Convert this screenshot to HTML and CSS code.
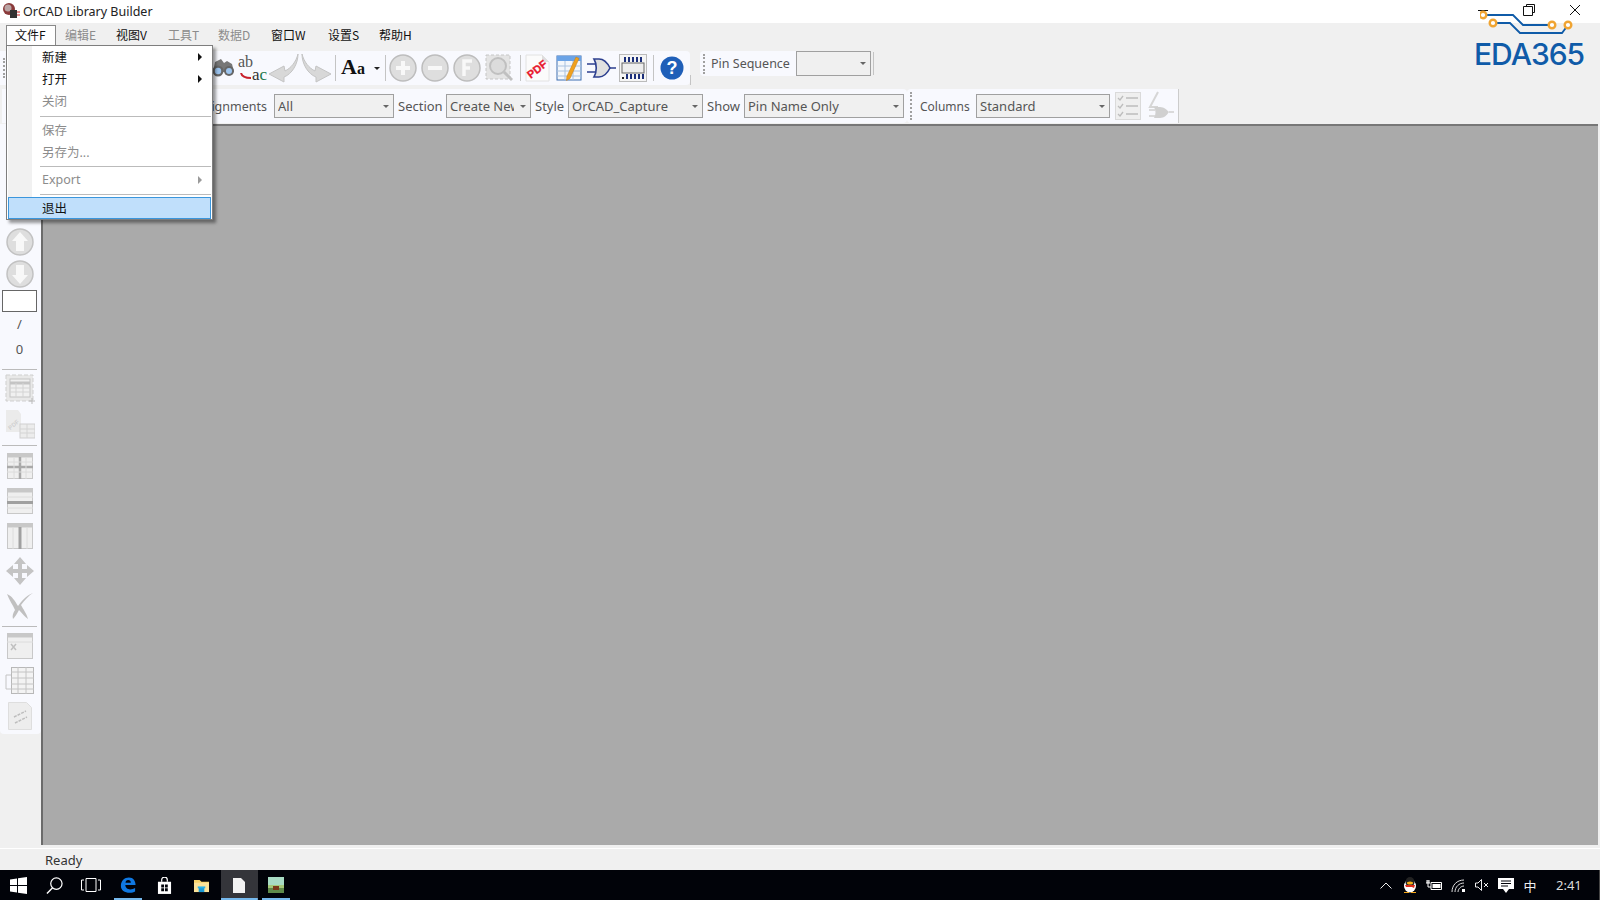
FILE: index.html
```html
<!DOCTYPE html>
<html lang="zh">
<head>
<meta charset="utf-8">
<title>OrCAD Library Builder</title>
<link rel="stylesheet" href="styles.css">
</head>
<body>
<div class="app">
  <header class="titlebar">
    <svg class="app-icon" viewBox="0 0 18 18"><circle cx="7" cy="7" r="6" fill="#8a3a3a"/><circle cx="6" cy="6" r="3.5" fill="#b9a5a5"/><rect x="8" y="8" width="7" height="8" fill="#333"/><path d="M15 10h3M15 13h3" stroke="#c22" stroke-width="1"/></svg>
    <span class="app-title">OrCAD Library Builder</span>
    <div class="win-controls">
      <span class="win-btn"><svg width="12" height="12" viewBox="0 0 12 12"><path d="M1 6.500h10" stroke="#111"/></svg></span>
      <span class="win-btn"><svg width="12" height="12" viewBox="0 0 12 12"><path d="M3.500 2.500V.5h8v8h-2M.5 2.500h9v9h-9z" fill="none" stroke="#111"/></svg></span>
      <span class="win-btn"><svg width="12" height="12" viewBox="0 0 12 12"><path d="M1 1l10 10M11 1L1 11" stroke="#111"/></svg></span>
    </div>
  </header>

  <nav class="menubar">
    <span class="menu-top open">文件F</span>
    <span class="menu-top off">编辑E</span>
    <span class="menu-top">视图V</span>
    <span class="menu-top off">工具T</span>
    <span class="menu-top off">数据D</span>
    <span class="menu-top">窗口W</span>
    <span class="menu-top">设置S</span>
    <span class="menu-top">帮助H</span>
  </nav>

  <section class="toolbars">
    <div class="tb-row">
      <div class="band band-main">
        <i class="grip"></i>
        <span class="hidden-tools"></span>
        <span class="tool"><svg width="24" height="20" viewBox="0 0 24 20"><path d="M4 4l6-3 3 4 3-2 5 3 2 8H2z" fill="#777"/><circle cx="7" cy="13" r="5.500" fill="#666"/><circle cx="18" cy="13" r="5" fill="#666"/><circle cx="7" cy="13" r="3.200" fill="#9cc4ee"/><circle cx="18" cy="13" r="3" fill="#9cc4ee"/></svg></span>
        <span class="tool abac"><span class="ab">ab</span><span class="ac">a<b class="ac-c">c</b></span><svg class="abarrow" width="12" height="8" viewBox="0 0 12 8"><path d="M1 0c1 4 4 5 10 5" fill="none" stroke="#c8202c" stroke-width="2"/></svg></span>
        <span class="tool"><svg width="30" height="30" viewBox="0 0 30 30"><path d="M29 1c-2 8-7 14-13 17l-1-5L0 21l15 8 0-5C23 21 29 11 29 1z" fill="#d8d8d8" stroke="#c4c4c4"/></svg></span>
        <span class="tool"><svg width="30" height="30" viewBox="0 0 30 30"><path d="M1 1c2 8 7 14 13 17l1-5 15 8-15 8 0-5C7 21 1 11 1 1z" fill="#d8d8d8" stroke="#c4c4c4"/></svg></span>
        <i class="sep"></i>
        <span class="tool-aa"><span class="aa">A<small class="aa-small">a</small></span><i class="mini-caret dark"></i></span>
        <i class="sep sep-b"></i>
        <span class="tool"><svg width="28" height="28" viewBox="0 0 28 28"><circle cx="14" cy="14" r="13" fill="#dedede" stroke="#bdbdbd" stroke-width="1.500"/><path d="M14 7v14M7 14h14" stroke="#f8f8f8" stroke-width="4"/></svg></span>
        <span class="tool"><svg width="28" height="28" viewBox="0 0 28 28"><circle cx="14" cy="14" r="13" fill="#dedede" stroke="#bdbdbd" stroke-width="1.500"/><path d="M7 14h14" stroke="#f8f8f8" stroke-width="4"/></svg></span>
        <span class="tool"><svg width="28" height="28" viewBox="0 0 28 28"><circle cx="14" cy="14" r="13" fill="#dedede" stroke="#bdbdbd" stroke-width="1.500"/><path d="M11 22V7h8M11 14h6" fill="none" stroke="#f8f8f8" stroke-width="3.500"/></svg></span>
        <span class="tool"><svg width="28" height="28" viewBox="0 0 28 28"><rect x="1" y="1" width="24" height="24" fill="#e4e4e4" stroke="#c6c6c6" stroke-dasharray="3 2"/><circle cx="13" cy="12" r="8" fill="#dcdcdc" stroke="#c0c0c0" stroke-width="2"/><path d="M19 18l8 8" stroke="#c0c0c0" stroke-width="3"/></svg></span>
        <i class="sep sep-c"></i>
        <span class="tool"><svg width="26" height="28" viewBox="0 0 26 28"><path d="M2 1h16l7 7v19H2z" fill="#fbfbfb" stroke="#e2e2e2"/><path d="M18 1l7 7h-7z" fill="#dedede"/><g transform="rotate(-38 13 15)"><text class="pdf-text" x="13" y="19" text-anchor="middle">PDF</text></g></svg></span>
        <span class="tool"><svg width="26" height="28" viewBox="0 0 26 28"><rect x="1" y="2" width="24" height="24" fill="#f4f7fb" stroke="#3d6fb0"/><rect x="1" y="2" width="24" height="5" fill="#6ba3e6"/><path d="M1 12h24M1 17h24M1 22h24M9 7v19M17 7v19" stroke="#a9c2e0"/><path d="M20 3l3 1.500-9 20-3.500 2 .3-4z" fill="#f0a11e" stroke="#c47a10" stroke-width=".5"/></svg></span>
        <span class="tool"><svg width="30" height="24" viewBox="0 0 30 24"><path d="M8 3h5c6 0 9 5 11 9-2 4-5 9-11 9H8c3-5 3-13 0-18z" fill="#e0e0e0" stroke="#2c3f8f" stroke-width="1.600"/><path d="M1 8h8M1 16h8M24 12h6" stroke="#2c3f8f" stroke-width="1.600"/></svg></span>
        <span class="tool"><svg width="28" height="28" viewBox="0 0 28 28"><rect x=".5" y=".5" width="27" height="27" fill="#f5f5f5" stroke="#bbb"/><rect x="3" y="9" width="22" height="10" fill="#eee" stroke="#666"/><path d="M6 3v5M10 3v5M14 3v5M18 3v5M22 3v5M8 20v5M12 20v5M16 20v5M20 20v5M24 20v5" stroke="#1c2f7a" stroke-width="2"/><rect x="3" y="23" width="2" height="2" fill="#222"/></svg></span>
        <i class="sep sep-d"></i>
        <span class="tool"><svg width="24" height="24" viewBox="0 0 24 24"><circle cx="12" cy="12" r="11.500" fill="#1f5fb8"/><text class="help-text" x="12" y="18" text-anchor="middle">?</text></svg></span>
      </div>
      <i class="sep short"></i>
      <div class="band band-pin">
        <i class="grip"></i>
        <span class="label">Pin Sequence</span>
        <span class="combo w-pin"><span class="combo-text"></span><i class="mini-caret"></i></span>
      </div>
      <i class="sep pin-end"></i>
    </div>

    <div class="tb-row">
      <div class="band band-fields">
        <span class="label label-assign">Pin Assignments</span>
        <span class="combo w-all"><span class="combo-text">All</span><i class="mini-caret"></i></span>
        <span class="label label-section">Section</span>
        <span class="combo w-new"><span class="combo-text">Create New</span><i class="mini-caret"></i></span>
        <span class="label label-style">Style</span>
        <span class="combo w-style"><span class="combo-text">OrCAD_Capture</span><i class="mini-caret"></i></span>
        <span class="label label-show">Show</span>
        <span class="combo w-show"><span class="combo-text">Pin Name Only</span><i class="mini-caret"></i></span>
      </div>
      <div class="band band-cols">
        <i class="grip"></i>
        <span class="label label-cols">Columns</span>
        <span class="combo w-cols"><span class="combo-text">Standard</span><i class="mini-caret"></i></span>
        <span class="tool"><svg width="26" height="28" viewBox="0 0 26 28"><rect x=".5" y=".5" width="25" height="27" fill="#efefef" stroke="#dadada"/><path d="M3 6l2 2 3-4M3 14l2 2 3-4M3 22l2 2 3-4M11 6h12M11 14h12M11 22h12" fill="none" stroke="#bdbdbd" stroke-width="1.300"/></svg></span>
        <span class="tool"><svg width="26" height="30" viewBox="0 0 26 30"><path d="M10 1L2 16h8" fill="none" stroke="#d6d6d6" stroke-width="2"/><path d="M6 16h6c4 0 7 3 9 5-2 3-5 6-9 6H6c2-4 2-7 0-11z" fill="#d0d0d0"/><path d="M1 19h6M1 25h6M21 21h5" stroke="#d0d0d0" stroke-width="1.500"/></svg></span>
      </div>
    </div>
  </section>

  <main class="workspace">
    <aside class="sidebar">
      <span class="side-hidden"></span>
      <span class="side-tool round"><svg width="28" height="28" viewBox="0 0 28 28"><circle cx="14" cy="14" r="13" fill="#dedede" stroke="#c2c2c2" stroke-width="1.500"/><path d="M14 4l8 9h-4v10h-8V13H6z" fill="#f8f8f8"/></svg></span>
      <span class="side-tool round"><svg width="28" height="28" viewBox="0 0 28 28"><circle cx="14" cy="14" r="13" fill="#dedede" stroke="#c2c2c2" stroke-width="1.500"/><path d="M14 24l8-9h-4V5h-8v10H6z" fill="#f8f8f8"/></svg></span>
      <span class="page-box"></span>
      <span class="side-text">/</span>
      <span class="side-text">0</span>
      <i class="side-sep"></i>
      <span class="side-tool"><svg width="30" height="30" viewBox="0 0 30 30"><rect x="1" y="1" width="27" height="26" fill="#e8e8e8" stroke="#cfcfcf" stroke-dasharray="4 2"/><rect x="5" y="5" width="20" height="18" fill="#f0f0f0" stroke="#c4c4c4"/><path d="M5 9h20" stroke="#c4c4c4" stroke-width="3"/><path d="M5 14h20M5 18h20M11 9v14M18 9v14" stroke="#d4d4d4"/><path d="M24 27h6M27 24v6" stroke="#bbb"/></svg></span>
      <span class="side-tool"><svg width="30" height="30" viewBox="0 0 30 30"><path d="M1 1h12l3 4v18H1z" fill="#ebebeb"/><text class="side-pdf" x="8" y="18" text-anchor="middle" transform="rotate(-40 8 15)">PDF</text><rect x="15" y="15" width="15" height="14" fill="#ececec" stroke="#cfcfcf"/><path d="M15 20h15M15 24h15M22 15v14" stroke="#d4d4d4"/></svg></span>
      <i class="side-sep gap-s"></i>
      <span class="side-tool"><svg width="26" height="26" viewBox="0 0 26 26"><rect x=".5" y=".5" width="25" height="25" fill="#efefef" stroke="#c8c8c8"/><path d="M0 2.500h26" stroke="#c8c8c8" stroke-width="4"/><path d="M0 14h26M13 4v22" stroke="#a9a9a9" stroke-width="2.500"/><path d="M0 9h26M0 19h26M7 4v22M19 4v22" stroke="#dcdcdc"/></svg></span>
      <span class="side-tool"><svg width="26" height="26" viewBox="0 0 26 26"><rect x=".5" y=".5" width="25" height="25" fill="#efefef" stroke="#c8c8c8"/><path d="M0 2.500h26" stroke="#c8c8c8" stroke-width="4"/><path d="M0 14.500h26" stroke="#a0a0a0" stroke-width="3"/><path d="M0 9h26M0 20h26" stroke="#dcdcdc"/></svg></span>
      <span class="side-tool"><svg width="26" height="26" viewBox="0 0 26 26"><rect x=".5" y=".5" width="25" height="25" fill="#efefef" stroke="#c8c8c8"/><path d="M0 2.500h26" stroke="#c8c8c8" stroke-width="4"/><path d="M13 4v22" stroke="#a0a0a0" stroke-width="3"/><path d="M6 4v22M20 4v22" stroke="#dcdcdc"/></svg></span>
      <span class="side-tool"><svg width="28" height="28" viewBox="0 0 28 28"><path d="M14 0l6 7h-4v5h5V8l7 6-7 6v-4h-5v5h4l-6 7-6-7h4v-5H7v4l-7-6 7-6v4h5V7H8z" fill="#c4c4c4"/></svg></span>
      <span class="side-tool"><svg width="28" height="28" viewBox="0 0 28 28"><path d="M27 1C19 4 15 10 12 14 9 9 6 4 1 2c2 6 6 11 8 16-2 3-3 6-2 9 2-2 4-5 6-9 3 3 6 7 9 9-1-5-5-10-7-14 4-5 8-10 12-12z" fill="#c0c0c0"/></svg></span>
      <i class="side-sep gap-t"></i>
      <span class="side-tool"><svg width="26" height="26" viewBox="0 0 26 26"><rect x=".5" y=".5" width="25" height="25" fill="#efefef" stroke="#c8c8c8"/><path d="M0 2.500h26" stroke="#c8c8c8" stroke-width="4"/><path d="M0 9h26" stroke="#dcdcdc"/><path d="M4 11l5 6M9 11l-5 6" stroke="#c0c0c0" stroke-width="1.500"/></svg></span>
      <span class="side-tool"><svg width="30" height="28" viewBox="0 0 30 28"><rect x="6.500" y=".5" width="22" height="26" fill="#f3f3f3" stroke="#b8b8b8"/><path d="M6 5h23M6 11h23M6 17h23M6 22h23M13 0v27M21 0v27" stroke="#c4c4c4"/><path d="M6 8H1v14h5" fill="none" stroke="#c4c4c4"/></svg></span>
      <span class="side-tool"><svg width="24" height="28" viewBox="0 0 24 28"><path d="M.5.500h18l5 5v22H.5z" fill="#ededed" stroke="#dedede"/><path d="M6 15l12-6M7 21l12-6" stroke="#bdbdbd" stroke-width="1.500" stroke-dasharray="3 1"/></svg></span>
    </aside>
    <div class="canvas"></div>
  </main>

  <footer class="statusbar"><span>Ready</span></footer>

  <div class="taskbar">
    <span class="task"><svg width="17" height="17" viewBox="0 0 17 17"><path d="M0 2.500l7-1v6.500H0zM8 1.300L17 0v8H8zM0 9h7v6.500l-7-1zM8 9h9v8l-9-1.300z" fill="#fff"/></svg></span>
    <span class="task"><svg width="17" height="17" viewBox="0 0 18 18"><circle cx="11" cy="7" r="6" fill="none" stroke="#fff" stroke-width="1.300"/><path d="M7 11.500L1 17.500" stroke="#fff" stroke-width="1.500"/></svg></span>
    <span class="task"><svg width="20" height="14" viewBox="0 0 20 14"><path d="M5 .5h10v13H5zM3 2H.5v10H3M17 2h2.500v10H17" fill="none" stroke="#fff"/></svg></span>
    <span class="task run"><svg width="16" height="16" viewBox="0 0 18 18"><path d="M1 10C1 4 5 .5 10 .5c5 0 7.500 4 7.500 8.500H6c0 3 2.500 5 5.500 5 2 0 4-.5 5.500-1.500v3.800c-1.500.9-3.500 1.400-6 1.400C5 17.700 1 14.500 1 10zm5.200-3.500h6c0-2-1-3-3-3s-2.700 1.300-3 3z" fill="#0f78e2"/></svg></span>
    <span class="task"><svg width="15" height="17" viewBox="0 0 16 18"><path d="M1 5h14v13H1z" fill="#fff"/><path d="M5 5V3a3 3 0 016 0v2" fill="none" stroke="#fff" stroke-width="1.300"/><path d="M4.500 8h3v3h-3zM8.500 8h3v3h-3zM4.500 12h3v3h-3zM8.500 12h3v3h-3z" fill="#010309"/></svg></span>
    <span class="task"><svg width="17" height="15" viewBox="0 0 18 16"><path d="M1 2h6l2 2h8v11H1z" fill="#f6d36b"/><path d="M1 5h16v10H1z" fill="#fbe39a"/><path d="M6 10h6v5H6z" fill="#1b9ad6"/><path d="M5 9h8v2H5z" fill="#28b0ea"/></svg></span>
    <span class="task run active"><svg width="12" height="15" viewBox="0 0 12 15"><path d="M0 0h8l4 4v11H0z" fill="#f2f2f2"/></svg></span>
    <span class="task run"><svg width="16" height="16" viewBox="0 0 16 16"><rect width="16" height="16" fill="#a8dcc4"/><rect y="10" width="16" height="6" fill="#5f8a4a"/><rect y="8" width="16" height="3" fill="#a5c878"/><rect x="5" y="9" width="6" height="4" fill="#7a3a1a"/></svg></span>
    <div class="tray">
      <span class="tray-i"><svg width="12" height="7" viewBox="0 0 12 7"><path d="M.5 6.500L6 1l5.500 5.500" fill="none" stroke="#eee"/></svg></span>
      <span class="tray-i"><svg width="14" height="16" viewBox="0 0 14 16"><ellipse cx="7" cy="9" rx="6" ry="6.500" fill="#fff"/><ellipse cx="7" cy="5" rx="4.500" ry="5" fill="#222"/><ellipse cx="7" cy="6" rx="3" ry="1.500" fill="#f5b21a"/><path d="M2 8h10l-1 3-2-1H3z" fill="#dd2a1b"/><path d="M1 15h5v1H1zM8 15h5v1H8z" fill="#f5a81a"/></svg></span>
      <span class="tray-i"><svg width="16" height="12" viewBox="0 0 16 12"><path d="M5 3.500h10.500v7H5z" fill="none" stroke="#fff"/><rect x="6.500" y="5" width="8" height="4" fill="#fff"/><path d="M0 4h4M2 1v3M1 1v3M3 1v3M2 4v4h3" fill="none" stroke="#fff"/></svg></span>
      <span class="tray-i"><svg width="14" height="13" viewBox="0 0 14 13"><path d="M1 13C1 6 6 1 13 1M4 13C4 8 8 4 13 4M7 13c0-3 3-6 6-6" fill="none" stroke="#ddd"/><rect x="11" y="10" width="3" height="3" fill="#fff"/></svg></span>
      <span class="tray-i"><svg width="15" height="12" viewBox="0 0 15 12"><path d="M.5 4h2.500L6.500.5v11L3 8H.5z" fill="none" stroke="#eee"/><path d="M9 4l4 4M13 4l-4 4" stroke="#eee"/></svg></span>
      <span class="tray-i"><svg width="16" height="15" viewBox="0 0 16 15"><path d="M0 0h16v11h-5l-3 4-3-4H0z" fill="#fff"/><path d="M3 3h10M3 5.500h10M3 8h7" stroke="#010309"/></svg></span>
      <span class="tray-i ime">中</span>
      <span class="clock">2:41</span>
      <i class="show-desktop"></i>
    </div>
  </div>

  <div class="logo">
    <svg width="102" height="30" viewBox="0 0 102 30"><path d="M3 7h30l10 10h29M13 15h17l10 10h42l6-8" fill="none" stroke="#0f5ba8" stroke-width="1.800"/><circle cx="3" cy="7" r="3.300" fill="#fff" stroke="#f0a432" stroke-width="2.400"/><circle cx="13" cy="15" r="3.300" fill="#fff" stroke="#f0a432" stroke-width="2.400"/><circle cx="72" cy="17" r="3.300" fill="#fff" stroke="#f0a432" stroke-width="2.400"/><circle cx="88" cy="17" r="3.300" fill="#fff" stroke="#f0a432" stroke-width="2.400"/></svg>
    <span class="logo-text">EDA365</span>
  </div>

  <div class="dropdown">
    <div class="dd-item"><span>新建</span><i class="arrow"></i></div>
    <div class="dd-item"><span>打开</span><i class="arrow"></i></div>
    <div class="dd-item off"><span>关闭</span></div>
    <i class="dd-sep first"></i>
    <div class="dd-item off"><span>保存</span></div>
    <div class="dd-item off"><span>另存为...</span></div>
    <i class="dd-sep"></i>
    <div class="dd-item off"><span>Export</span><i class="arrow"></i></div>
    <i class="dd-sep"></i>
    <div class="dd-item hot"><span>退出</span></div>
  </div>
</div>
</body>
</html>
```

FILE: styles.css
```css
* { box-sizing: border-box; }
html, body { margin: 0; padding: 0; height: 100%; overflow: hidden; }
body { font-family: "Noto Sans", "Noto Sans CJK SC", sans-serif; font-size: 12.500px; color: #111; }
i { display: block; font-style: normal; }
svg { display: block; flex: none; }

.app { position: relative; width: 1600px; height: 900px; display: flex; flex-direction: column; background: #f0f0f0; overflow: hidden; }

.titlebar { height: 23px; flex: none; background: #fff; display: flex; align-items: center; padding: 0 2px 1px; }
.app-icon { width: 18px; height: 18px; }
.app-title { margin-left: 3px; font-size: 12.500px; color: #222; }
.win-controls { margin-left: auto; display: flex; margin-top: -2px; }
.win-btn { width: 46px; height: 22px; display: flex; align-items: center; justify-content: center; }

.menubar { height: 23px; flex: none; display: flex; padding-left: 6px; font-size: 12px; font-family: "Noto Sans CJK SC", sans-serif; }
.menu-top { width: 51px; padding-left: 9px; line-height: 19px; margin-top: 2px; height: 21px; white-space: nowrap; }
.menu-top:nth-child(3) { width: 52px; }
.menu-top:nth-child(4) { width: 50px; }
.menu-top:nth-child(5) { width: 53px; }
.menu-top:nth-child(6) { width: 57px; }
.menu-top.open { width: 50px; padding-left: 8px; border: 1px solid #8a8a8a; border-bottom: 0; background: #fff; line-height: 18px; }
.menu-top.off { color: #8c8c8c; }

.toolbars { flex: none; height: 78px; padding-top: 5px; display: flex; flex-direction: column; gap: 4px; }
.tb-row { display: flex; height: 34px; align-items: stretch; }
.band { background: #f8f9fe; display: flex; align-items: center; border-radius: 0 4px 4px 0; }
.band-main { width: 690px; padding-left: 3px; }
.band-pin { width: 170px; margin-left: 9px; height: 25px; padding-left: 3px; border-radius: 4px 0 0 4px; flex: none; }
.band-pin .grip { margin-right: 5px; }
.band-pin .label { margin-right: 6px; }
.grip { width: 3px; height: 20px; border-left: 2px dotted #a0a0a0; flex: none; }
.hidden-tools { width: 201px; flex: none; }
.tool { width: 32px; height: 30px; display: flex; align-items: center; justify-content: center; flex: none; position: relative; }
.sep { width: 1px; height: 26px; background: #c4c4c4; flex: none; margin: 0 3px; align-self: center; }
.sep-b { margin-right: 1px; }
.sep-c { margin: 0 0 0 5px; }
.sep-d { margin: 0 2px 0 4px; }
.sep.short { align-self: flex-end; height: 10px; margin: 0; }
.sep.pin-end { height: 23px; align-self: flex-start; margin: 1px 0 0 3px; }

.abac { width: 29px; font-family: "Liberation Serif", serif; color: #555; }
.ab { position: absolute; left: -1px; top: 0; font-size: 16px; line-height: 18px; }
.ac { position: absolute; left: 13px; top: 13px; color: #333; font-size: 17px; line-height: 18px; }
.ac-c { color: #1d7a4e; font-weight: 400; }
.abarrow { position: absolute; left: 1px; top: 20px; }
.tool-aa { width: 43px; height: 30px; display: flex; align-items: center; gap: 9px; flex: none; padding-left: 2px; }
.aa { font-family: "Liberation Serif", serif; font-weight: 700; font-size: 22px; color: #111; line-height: 24px; }
.aa-small { font-size: 16px; }
.pdf-text { font: 700 11px "Liberation Sans", sans-serif; fill: #e8172c; stroke: #e8172c; stroke-width: .3px; }
.help-text { font: 700 18px "Liberation Sans", sans-serif; fill: #fff; }
.side-pdf { font: 700 6px "Liberation Sans", sans-serif; fill: #d0d0d0; }

.mini-caret { width: 0; height: 0; border-style: solid; border-color: #666 transparent transparent; border-width: 3px 3px 0; flex: none; }
.mini-caret.dark { border-top-color: #222; border-width: 3.500px 3.500px 0; }

.label { color: #555; white-space: nowrap; flex: none; }
.combo { height: 24px; display: flex; align-items: center; border: 1px solid #a0a0a0; background: #f0f0f0; padding: 0 4px 0 3px; flex: none; color: #555; font-size: 13px; }
.combo-text { flex: 1; overflow: hidden; white-space: nowrap; min-width: 0; }
.w-pin { width: 75px; height: 25px; margin-left: auto; }
.w-all { width: 120px; }
.w-new { width: 85px; }
.w-new .combo-text { margin-right: 6px; }
.w-style { width: 135px; }
.w-show { width: 160px; }
.w-cols { width: 134px; }

.band-fields { width: 905px; margin-left: 2px; justify-content: flex-end; padding-right: 3px; overflow: hidden; flex: none; }
.label-assign { padding-right: 7px; }
.label-section { width: 52px; padding-left: 4px; font-size: 13px; }
.label-style { width: 37px; padding-left: 4px; font-size: 13px; }
.label-show { width: 41px; padding-left: 4px; font-size: 13px; }
.label-cols { width: 56px; font-size: 12px; }
.band-cols { width: 272px; padding-left: 3px; border-radius: 4px 0 0 4px; border-right: 1px solid #ccc; flex: none; }
.band-cols .grip { margin-right: 7px; height: 28px; }
.band-cols .tool { width: 31px; margin-left: 2px; }

.workspace { flex: 1; min-height: 0; display: flex; background: #f0f0f0; padding-bottom: 3px; }
.sidebar { width: 41px; flex: none; height: 610px; background: #f8f9fe; display: flex; flex-direction: column; align-items: center; padding-right: 2px; border-radius: 0 0 4px 4px; }
.side-hidden { height: 102px; flex: none; }
.side-tool { height: 35px; width: 36px; display: flex; align-items: center; justify-content: center; flex: none; }
.side-tool.round { height: 32px; }
.page-box { width: 35px; height: 22px; background: #fff; border: 1px solid #666; flex: none; }
.side-text { height: 25px; line-height: 25px; color: #555; flex: none; font-size: 13px; }
.side-sep { width: 35px; height: 1px; background: #bbb; margin: 7px 0 1px; flex: none; }
.side-sep.gap-s { margin: 4px 0 2px; }
.side-sep.gap-t { margin: 3px 0 1px; }

.canvas { flex: none; width: 1557px; background: #aaa; border-left: 2px solid #6b6b6b; border-top: 2px solid #777; }
.statusbar { flex: none; height: 22px; padding-left: 45px; line-height: 23px; border-top: 1px solid #fff; color: #333; font-size: 13px; }

.taskbar { height: 30px; flex: none; background: #010309; display: flex; }
.task { width: 36.600px; height: 30px; display: flex; align-items: center; justify-content: center; flex: none; }
.task.run { background: linear-gradient(#76b9ed, #76b9ed) no-repeat center bottom / 28px 2px; }
.task.run.active { margin-left: 1.500px; background: linear-gradient(#76b9ed, #76b9ed) no-repeat center bottom / 100% 2px, #34353a; }
.tray { margin-left: auto; display: flex; align-items: center; height: 30px; }
.tray-i { width: 24px; display: flex; justify-content: center; align-items: center; color: #eee; }
.ime { font-family: "Noto Sans CJK SC", sans-serif; font-size: 13px; }
.clock { color: #ddd; font-size: 13px; margin-left: 14px; width: 43px; }
.show-desktop { width: 1px; height: 30px; background: #444; }

.logo { position: absolute; left: 1480px; top: 8px; width: 110px; display: flex; flex-direction: column; }
.logo-text { color: #0f5ba8; font-family: "Inter", sans-serif; font-size: 30px; font-weight: 500; line-height: 30px; margin-left: -6px; margin-top: 1px; letter-spacing: -1px; white-space: nowrap; }

.dropdown { position: absolute; left: 6px; top: 45px; width: 207px; height: 175px; background: #fff linear-gradient(#f1f1f1, #f1f1f1) no-repeat 1px 0 / 24px 100%; border: 1px solid #7e7e7e; box-shadow: 3px 3px 3px rgba(0,0,0,.4); padding: 0 1px; font-size: 12.500px; }
.dd-item { height: 22px; padding: 0 0 2px 34px; position: relative; display: flex; align-items: center; color: #111; }
.dd-item.off { color: #8c8c8c; }
.dd-item.hot { border: 1px solid #3a96dd; background: #c0dffb; padding: 0 0 2px 33px; }
.dd-sep { height: 1px; background: #bbb; margin: 3px 0 2px 32px; }
.dd-sep.first { margin-top: 4px; }
.arrow { position: absolute; right: 9px; top: 7px; width: 0; height: 0; border-style: solid; border-color: transparent transparent transparent #111; border-width: 4px 0 4px 4px; }
.dd-item.off .arrow { border-left-color: #9a9a9a; }
```
